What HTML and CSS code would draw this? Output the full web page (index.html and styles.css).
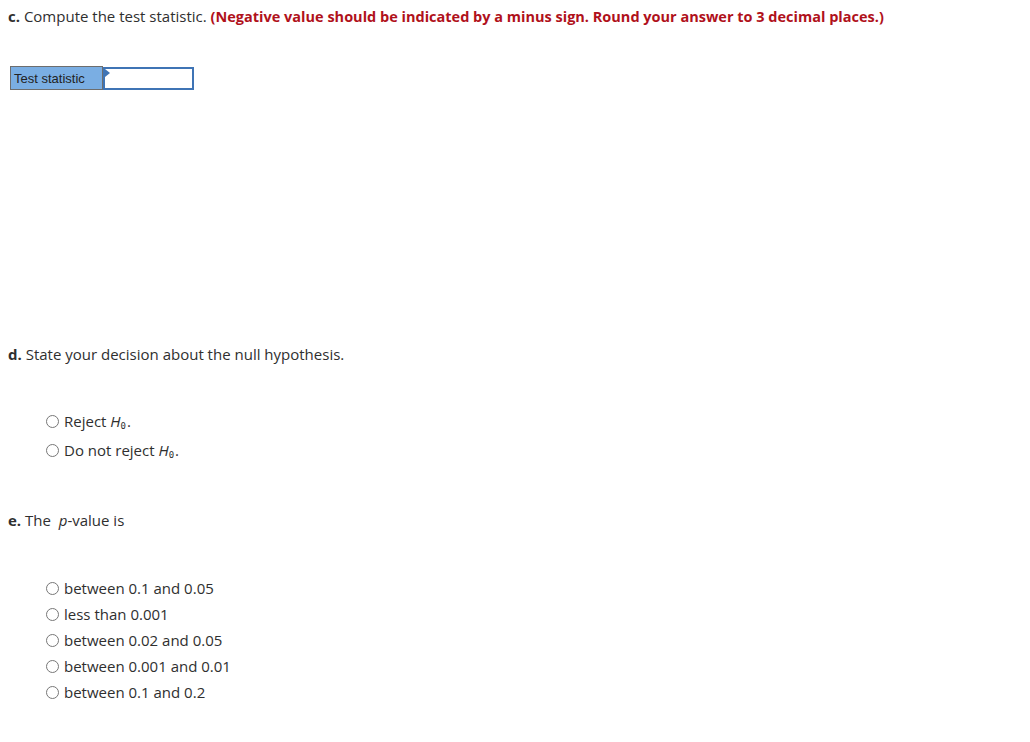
FILE: index.html
```html
<!DOCTYPE html>
<html lang="en">
<head>
  <meta charset="UTF-8" />
  <title>Hypothesis test</title>
  <link rel="stylesheet" href="styles.css">
</head>
<body>

  <div class="part part-c">
    <p class="prompt"><b>c.</b> Compute the test statistic. <span class="hint">(Negative value should be indicated by a minus sign. Round your answer to 3 decimal places.)</span></p>
    <table class="answer-table">
      <tr>
        <td class="answer-label">Test statistic</td>
        <td class="answer-cell"><span class="flag"></span><input type="text" class="answer-input"></td>
      </tr>
    </table>
  </div>

  <div class="part part-d">
    <p class="prompt"><b>d.</b> State your decision about the null hypothesis.</p>
    <div class="choices">
      <label class="choice"><span class="radio"></span><span>Reject <i>H</i><sub>0</sub>.</span></label>
      <label class="choice"><span class="radio"></span><span>Do not reject <i>H</i><sub>0</sub>.</span></label>
    </div>
  </div>

  <div class="part part-e">
    <p class="prompt"><b>e.</b> The &nbsp;<i class="pval">p</i>-value is</p>
    <div class="choices tight">
      <label class="choice"><span class="radio"></span><span>between 0.1 and 0.05</span></label>
      <label class="choice"><span class="radio"></span><span>less than 0.001</span></label>
      <label class="choice"><span class="radio"></span><span>between 0.02 and 0.05</span></label>
      <label class="choice"><span class="radio"></span><span>between 0.001 and 0.01</span></label>
      <label class="choice"><span class="radio"></span><span>between 0.1 and 0.2</span></label>
    </div>
  </div>

</body>
</html>
```

FILE: styles.css
```css
body {
  margin: 0;
  padding: 7px 8px 0;
  font-family: "Open Sans", Lato, sans-serif;
  font-size: 15px;
  color: #2f2f2f;
  background: #fff;
}

.prompt {
  margin: 0;
  line-height: 18px;
}

.prompt b {
  font-weight: bold;
}

.hint {
  color: #b0111b;
  font-weight: bold;
  font-size: 14.5px;
}

.answer-table {
  border-collapse: collapse;
  margin: 40px 0 0 2px;
}

.answer-table td {
  padding: 0;
  height: 23px;
}

.answer-label {
  width: 92px;
  background: #7aaee3;
  border: 1px solid #6d6d6d;
  font-family: "Liberation Sans", Arial, sans-serif;
  font-size: 13px;
  color: #222;
  padding-left: 3px !important;
  box-sizing: border-box;
}

.answer-cell {
  position: relative;
  width: 91px;
}

.answer-input {
  display: block;
  width: 91px;
  height: 23px;
  box-sizing: border-box;
  border: 2px solid #3f74b5;
  margin: 0;
  outline: none;
}

.flag {
  position: absolute;
  left: 2px;
  top: 2px;
  width: 0;
  height: 0;
  border-top: 4px solid transparent;
  border-bottom: 4px solid transparent;
  border-left: 5px solid #3f74b5;
}

.part-d {
  margin-top: 255px;
}

.choices {
  margin: 49px 0 0 38px;
  display: flex;
  flex-direction: column;
  gap: 11px;
}

.choices.tight {
  gap: 8px;
}

.choice {
  display: flex;
  align-items: center;
  line-height: 18px;
}

.choice i {
  font-style: italic;
}

.choice sub {
  font-family: "DejaVu Sans Mono", monospace;
  font-size: 9px;
  line-height: 0;
  vertical-align: -2px;
  margin-right: 1px;
}

.radio {
  width: 13px;
  height: 13px;
  border: 1px solid #777;
  border-radius: 50%;
  box-sizing: border-box;
  margin-right: 5px;
  flex: none;
}

.part-e {
  margin-top: 52px;
}

.part-e .choices {
  margin-top: 50px;
}

.pval {
  font-style: italic;
}
```
